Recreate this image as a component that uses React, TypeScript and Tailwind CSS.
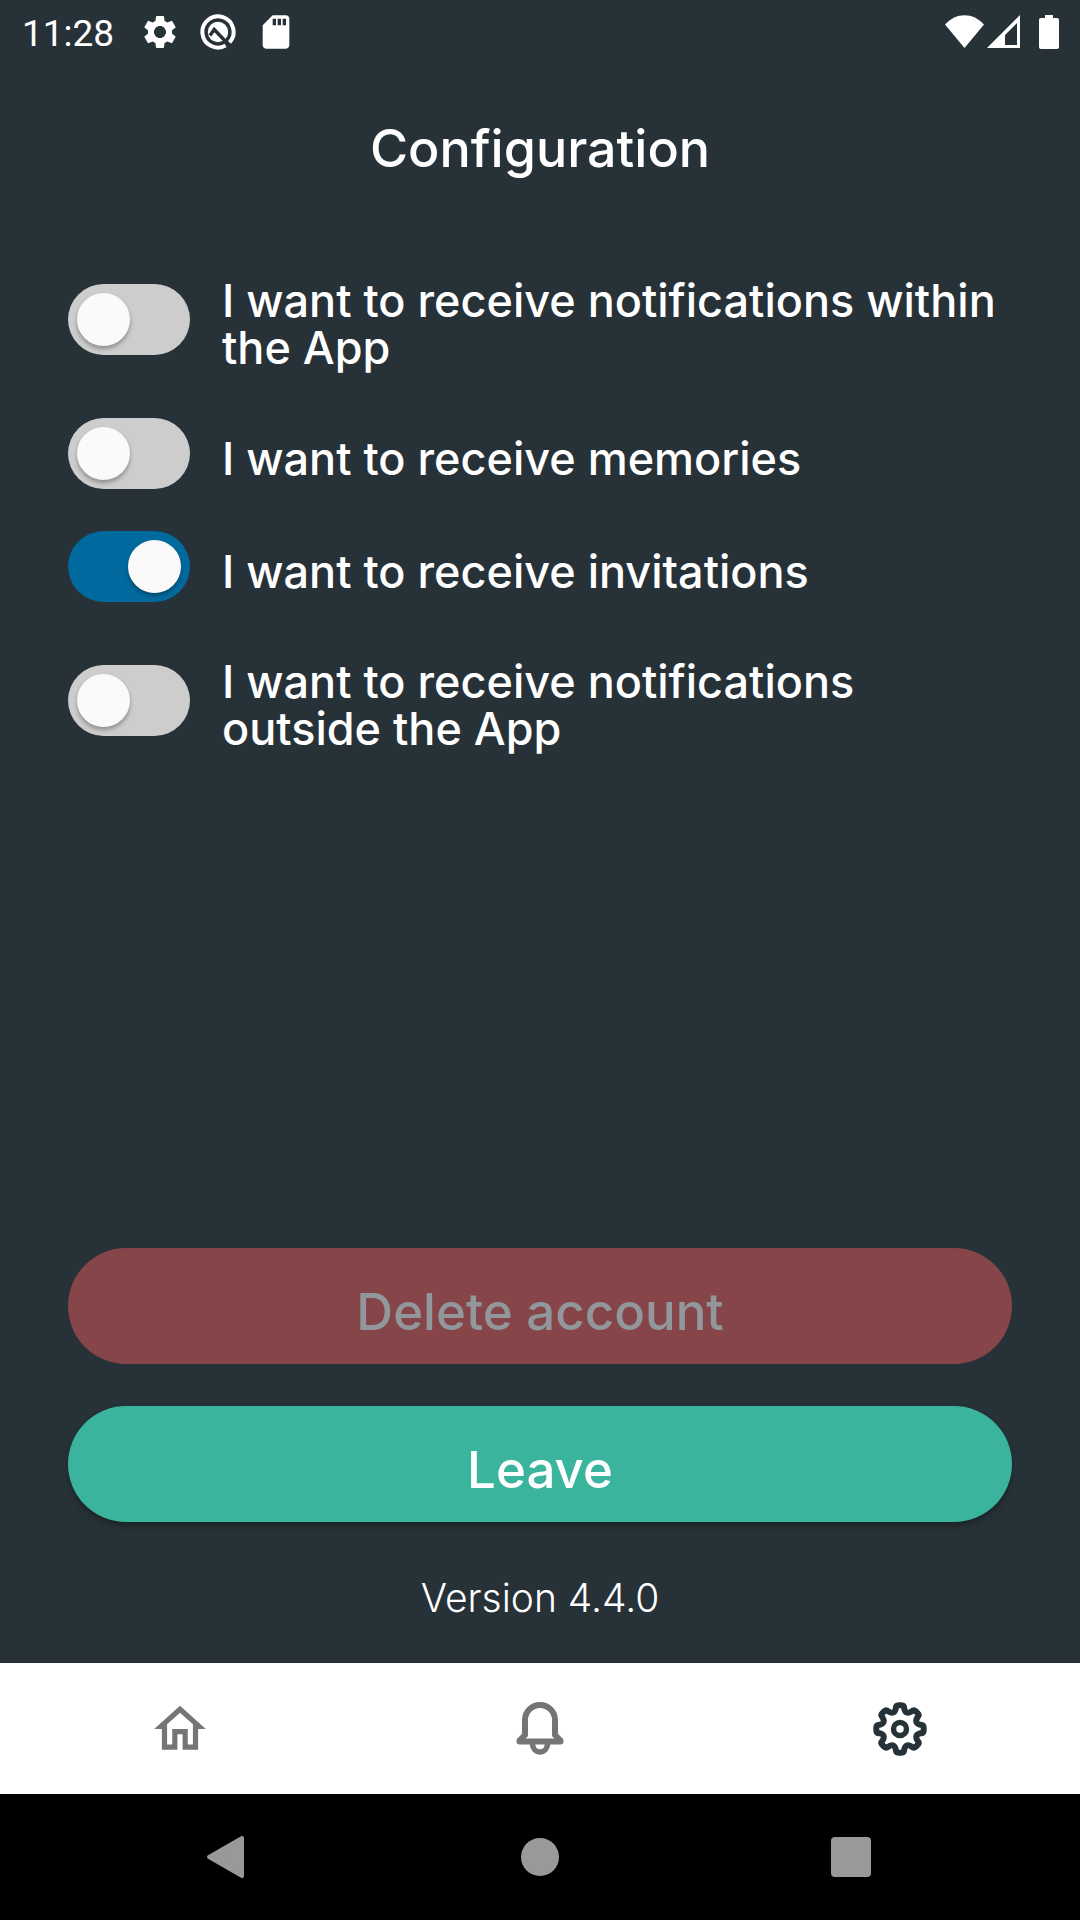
import { useState } from "react";
import { MdSettings, MdSdCard, MdOutlineHome } from "react-icons/md";

const OPTIONS = [
  { id: "in-app", label: "I want to receive notifications within the App", on: false },
  { id: "memories", label: "I want to receive memories", on: false },
  { id: "invitations", label: "I want to receive invitations", on: true },
  { id: "outside", label: "I want to receive notifications outside the App", on: false },
];

function StatusBar() {
  return (
    <header className="flex h-[63px] items-center justify-between pr-[19px] pl-[22px] font-['Roboto',sans-serif]">
      <div className="flex items-center gap-[18px]">
        <span className="mr-2 pt-1 text-[37px] leading-[59px]">11:28</span>
        <MdSettings className="size-10" />
        <svg className="size-10" viewBox="0 0 40 40" fill="none">
          <path d="M31.5 30.5A15.6 15.6 0 1 0 27.6 33.6" stroke="currentColor" strokeWidth="4" />
          <circle cx="20" cy="20" r="10.2" fill="currentColor" />
          <path d="M12 23.5L16.2 17.5L32 34" stroke="#273238" strokeWidth="3.4" />
        </svg>
        <MdSdCard className="size-10" />
      </div>
      <svg className="h-[34px] w-[116px]" viewBox="0 0 116 34" fill="currentColor">
        <path d="M0 9.5C11-3 28-3 39 9.5L19.5 33Z" />
        <path fillRule="evenodd" d="M75 0V33H42ZM72 8L60 20V30H72Z" />
        <path d="M100 0H108V3H112Q114 3 114 5V32Q114 34 112 34H96Q94 34 94 32V5Q94 3 96 3H100Z" />
      </svg>
    </header>
  );
}

function Option({ id, label, on }: { id: string; label: string; on: boolean }) {
  const [checked, setChecked] = useState(on);
  return (
    <div className="flex items-center gap-8">
      <input
        id={id}
        type="checkbox"
        role="switch"
        checked={checked}
        onChange={(e) => setChecked(e.target.checked)}
        className="flex h-[71px] w-[122px] shrink-0 appearance-none items-center rounded-full bg-[#cdcdcd] px-[9px] before:size-[53px] before:rounded-full before:bg-[#fafafa] before:shadow-[0_3px_4px_rgba(0,0,0,0.3)] checked:justify-end checked:bg-[#006a9f]"
      />
      <label htmlFor={id} className="pt-[14px] pb-[5px] text-[45px] leading-[47px] font-medium">
        {label}
      </label>
    </div>
  );
}

function BellIcon() {
  return (
    <svg className="size-[60px]" viewBox="0 0 60 60" fill="none" stroke="currentColor" strokeWidth="6" strokeLinejoin="round">
      <path d="M15 36V21A15 15 0 0 1 45 21V36L50.5 41.5V42.5H9.5V41.5Z" />
      <path d="M22.3 43.5C22.3 49 25.500 53 30 53S37.700 49 37.700 43.500" strokeWidth="5.5" />
    </svg>
  );
}

function turn(x: number, y: number, k: number) {
  const a = (k * Math.PI) / 4;
  const px = x * Math.cos(a) - y * Math.sin(a);
  const py = x * Math.sin(a) + y * Math.cos(a);
  return `${px.toFixed(2)} ${py.toFixed(2)}`;
}

// Eight rounded teeth, each one the first tooth turned by 45 degrees.
const GEAR =
  `M${turn(-4.2, -20.5, 0)}` +
  [0, 1, 2, 3, 4, 5, 6, 7]
    .map(
      (k) =>
        `Q${turn(-4.2, -23.7, k)} ${turn(-1.2, -23.7, k)}L${turn(1.2, -23.7, k)}` +
        `Q${turn(4.2, -23.7, k)} ${turn(4.2, -20.5, k)}` +
        `Q${turn(5.7, -13.9, k)} ${turn(-4.2, -20.5, k + 1)}`,
    )
    .join("") +
  "Z";

function GearIcon() {
  return (
    <svg className="size-[60px]" viewBox="-30 -30 60 60" fill="none" stroke="currentColor" strokeWidth="6" strokeLinejoin="round">
      <path d={GEAR} />
      <circle r="6.5" strokeWidth="5.5" />
    </svg>
  );
}

export default function App() {
  return (
    <div className="flex min-h-screen flex-col bg-[#273238] font-['Inter',sans-serif] text-white">
      <StatusBar />
      <main className="flex flex-1 flex-col px-[68px]">
        <h1 className="pt-[56px] text-center text-[52px] leading-[60px] font-medium">Configuration</h1>
        <div className="mt-[84px] flex flex-col gap-[42px]">
          {OPTIONS.map((o) => (
            <Option key={o.id} {...o} />
          ))}
        </div>
        <div className="mt-auto flex flex-col gap-[42px]">
          <button disabled className="h-[116px] rounded-full bg-[#864649] pt-3 text-[51px] font-medium text-[#92979b]">
            Delete account
          </button>
          <button className="h-[116px] rounded-full bg-[#3ab49d] pt-3 text-[51px] font-medium shadow-[0_4px_6px_rgba(0,0,0,0.3)]">
            Leave
          </button>
        </div>
        <p className="pt-[52px] pb-[41px] text-center text-[39px] leading-[48px] font-light">Version 4.4.0</p>
      </main>
      <nav className="grid h-[131px] grid-cols-3 bg-white text-[#757575]">
        <button aria-label="Home" className="flex items-center justify-center">
          <MdOutlineHome className="size-[62px]" />
        </button>
        <button aria-label="Notifications" className="flex items-center justify-center">
          <BellIcon />
        </button>
        <button aria-label="Configuration" aria-current="page" className="flex items-center justify-center text-[#273238]">
          <GearIcon />
        </button>
      </nav>
      <footer className="grid h-[126px] grid-cols-3 bg-black px-[73px] text-[#999999]">
        <button aria-label="Back" className="flex items-center justify-center">
          <svg className="size-[48px]" viewBox="0 0 48 48" fill="currentColor" stroke="currentColor" strokeWidth="4" strokeLinejoin="round">
            <path d="M4 24L37 5V43Z" />
          </svg>
        </button>
        <button aria-label="Home screen" className="flex items-center justify-center">
          <span className="size-[38px] rounded-full bg-[#999999]" />
        </button>
        <button aria-label="Recent apps" className="flex items-center justify-center">
          <span className="size-10 rounded bg-[#999999]" />
        </button>
      </footer>
    </div>
  );
}
